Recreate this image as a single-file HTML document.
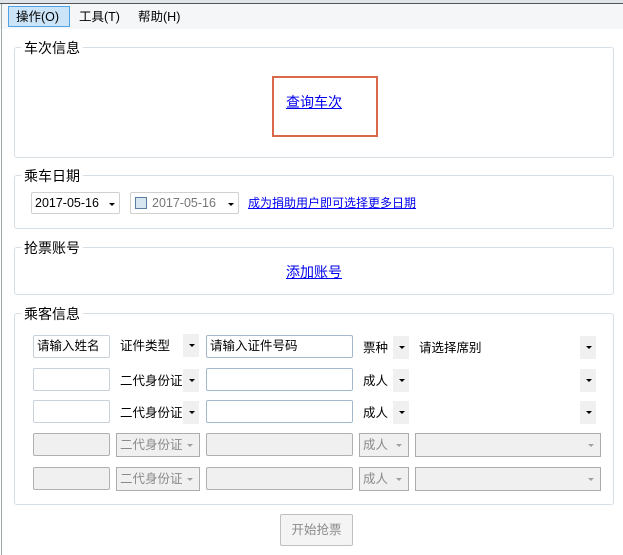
<!DOCTYPE html><html><head><meta charset="utf-8"><style>
*{margin:0;padding:0;box-sizing:border-box}
body{width:623px;height:555px;background:#fff;position:relative;overflow:hidden;font-family:"Liberation Sans","Noto Sans CJK SC",sans-serif;font-size:12px;color:#000}
.a{position:absolute}
.g{position:absolute;border:1px solid #d5dfe5;border-radius:3px;left:14px;width:600px}
.lb{position:absolute;background:#fff;padding:0 3px;font-size:14px;left:6px;top:-8px;line-height:16px}
.in{position:absolute;border:1px solid #c8d2dc;border-radius:2px;background:#fff;height:23px;line-height:21px;padding-left:3px;font-size:12.5px}
.in.b{border-color:#a3b8cc}
.dis{background:#f0f0f0;border-color:#b0b0b0}
.dd{position:absolute;background:#f0f0f0;width:16px;height:23px}
.dd:after,.c:after{content:"";position:absolute;left:6px;top:10px;border:3px solid transparent;border-top:3px solid #000;border-bottom:0;width:0}
.c{position:absolute;border:1px solid #acacac;background:#f0f0f0;height:24px;color:#8a8a8a;line-height:22px;padding-left:3px;font-size:12.5px}
.c:after{left:auto;right:6px;border-top-color:#a0a0a0}
.t{position:absolute;font-size:12.5px;line-height:16px}
a{color:#0000ee;text-decoration:underline}
</style></head><body>
<div class="a" style="left:0;top:0;width:623px;height:3px;background:#dfe4ea"></div>
<div class="a" style="left:0;top:3px;width:623px;height:1px;background:#555"></div>
<div class="a" style="left:0;top:4px;width:623px;height:25px;background:#f5f6f7"></div>
<div class="a" style="left:1px;top:4px;width:1px;height:551px;background:#9aa"></div>
<div class="a" style="left:8px;top:6px;width:62px;height:21px;background:#cce4f7;border:1px solid #4da3e6"></div>
<div class="t" style="left:16px;top:9px">操作(O)</div>
<div class="t" style="left:79px;top:9px">工具(T)</div>
<div class="t" style="left:138px;top:9px">帮助(H)</div>

<div class="g" style="top:47px;height:111px"><div class="lb">车次信息</div></div>
<div class="a" style="left:272px;top:76px;width:106px;height:61px;border:2px solid #d9694a"></div>
<div class="t" style="left:286px;top:94px;font-size:14px"><a>查询车次</a></div>

<div class="g" style="top:175px;height:54px"><div class="lb">乘车日期</div></div>
<div class="in" style="left:31px;top:192px;width:89px;height:22px;border-color:#d0d0d0">2017-05-16</div>
<div class="dd" style="left:103px;top:193px;background:none;height:20px"></div>
<div class="in" style="left:130px;top:192px;width:109px;height:22px;border-color:#d0d0d0;color:#777;padding-left:21px">2017-05-16</div>
<div class="a" style="left:135px;top:197px;width:12px;height:12px;border:1px solid #5a7ea0;background:#d8e6f2"></div>
<div class="dd" style="left:222px;top:193px;background:none;height:20px"></div>
<div class="t" style="left:248px;top:195px;font-size:12px"><a>成为捐助用户即可选择更多日期</a></div>

<div class="g" style="top:247px;height:48px"><div class="lb">抢票账号</div></div>
<div class="t" style="left:286px;top:264px;font-size:14px"><a>添加账号</a></div>

<div class="g" style="top:313px;height:192px"><div class="lb">乘客信息</div></div>

<div class="in" style="left:33px;top:335px;width:77px">请输入姓名</div>
<div class="t" style="left:120px;top:338px">证件类型</div>
<div class="dd" style="left:183px;top:334px"></div>
<div class="in b" style="left:206px;top:335px;width:147px">请输入证件号码</div>
<div class="t" style="left:363px;top:340px">票种</div>
<div class="dd" style="left:393px;top:336px"></div>
<div class="t" style="left:419px;top:340px">请选择席别</div>
<div class="dd" style="left:580px;top:336px"></div>

<div class="in" style="left:33px;top:368px;width:77px"></div>
<div class="t" style="left:120px;top:373px">二代身份证</div>
<div class="dd" style="left:183px;top:369px"></div>
<div class="in b" style="left:206px;top:368px;width:147px"></div>
<div class="t" style="left:363px;top:373px">成人</div>
<div class="dd" style="left:393px;top:369px"></div>
<div class="dd" style="left:580px;top:369px"></div>

<div class="in" style="left:33px;top:400px;width:77px"></div>
<div class="t" style="left:120px;top:405px">二代身份证</div>
<div class="dd" style="left:183px;top:401px"></div>
<div class="in b" style="left:206px;top:400px;width:147px"></div>
<div class="t" style="left:363px;top:405px">成人</div>
<div class="dd" style="left:393px;top:401px"></div>
<div class="dd" style="left:580px;top:401px"></div>

<div class="in dis" style="left:33px;top:433px;width:77px"></div>
<div class="c" style="left:116px;top:433px;width:84px">二代身份证</div>
<div class="in dis" style="left:206px;top:433px;width:147px"></div>
<div class="c" style="left:359px;top:433px;width:50px">成人</div>
<div class="c" style="left:415px;top:433px;width:186px"></div>

<div class="in dis" style="left:33px;top:467px;width:77px"></div>
<div class="c" style="left:116px;top:467px;width:84px">二代身份证</div>
<div class="in dis" style="left:206px;top:467px;width:147px"></div>
<div class="c" style="left:359px;top:467px;width:50px">成人</div>
<div class="c" style="left:415px;top:467px;width:186px"></div>

<div class="a" style="left:280px;top:514px;width:73px;height:32px;border:1px solid #c0c0c0;border-radius:2px;background:#f4f4f4;color:#8a8a8a;text-align:center;line-height:30px;font-size:12.5px">开始抢票</div>
</body></html>
